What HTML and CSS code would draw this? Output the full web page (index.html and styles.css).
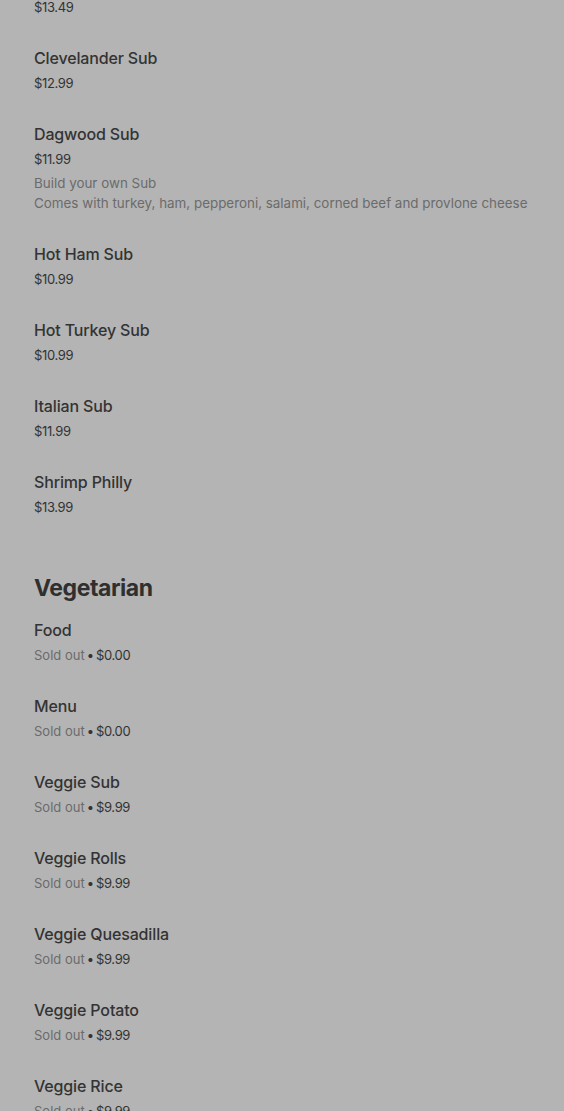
FILE: index.html
```html
<!DOCTYPE html>
<html lang="en">
<head>
<meta charset="utf-8">
<title>Menu</title>
<link rel="stylesheet" href="styles.css">
</head>
<body>
<main class="menu">
  <section class="section first">
    <div class="item">
      <div class="price">$13.49</div>
    </div>
    <div class="item">
      <div class="title">Clevelander Sub</div>
      <div class="price">$12.99</div>
    </div>
    <div class="item">
      <div class="title">Dagwood Sub</div>
      <div class="price">$11.99</div>
      <div class="desc">Build your own Sub<br>Comes with turkey, ham, pepperoni, salami, corned beef and provlone cheese</div>
    </div>
    <div class="item">
      <div class="title">Hot Ham Sub</div>
      <div class="price">$10.99</div>
    </div>
    <div class="item">
      <div class="title">Hot Turkey Sub</div>
      <div class="price">$10.99</div>
    </div>
    <div class="item">
      <div class="title">Italian Sub</div>
      <div class="price">$11.99</div>
    </div>
    <div class="item">
      <div class="title">Shrimp Philly</div>
      <div class="price">$13.99</div>
    </div>
  </section>
  <section class="section">
    <h2 class="heading">Vegetarian</h2>
    <div class="item">
      <div class="title">Food</div>
      <div class="price"><span class="sold">Sold out</span><span class="dot">•</span>$0.00</div>
    </div>
    <div class="item">
      <div class="title">Menu</div>
      <div class="price"><span class="sold">Sold out</span><span class="dot">•</span>$0.00</div>
    </div>
    <div class="item">
      <div class="title">Veggie Sub</div>
      <div class="price"><span class="sold">Sold out</span><span class="dot">•</span>$9.99</div>
    </div>
    <div class="item">
      <div class="title">Veggie Rolls</div>
      <div class="price"><span class="sold">Sold out</span><span class="dot">•</span>$9.99</div>
    </div>
    <div class="item">
      <div class="title">Veggie Quesadilla</div>
      <div class="price"><span class="sold">Sold out</span><span class="dot">•</span>$9.99</div>
    </div>
    <div class="item">
      <div class="title">Veggie Potato</div>
      <div class="price"><span class="sold">Sold out</span><span class="dot">•</span>$9.99</div>
    </div>
    <div class="item">
      <div class="title">Veggie Rice</div>
      <div class="price"><span class="sold">Sold out</span><span class="dot">•</span>$9.99</div>
    </div>
  </section>
</main>
</body>
</html>
```
FILE: styles.css
```css
html, body {
  margin: 0;
  padding: 0;
  background: #b4b4b4;
  overflow: hidden;
}
body {
  font-family: Inter, "Noto Sans", sans-serif;
  color: #333333;
}
.menu {
  margin-top: -3px;
  padding: 0 34px;
  display: flex;
  flex-direction: column;
  gap: 55px;
}
.section {
  display: flex;
  flex-direction: column;
  gap: 29px;
}
.heading {
  margin: 0 0 -15px;
  font-size: 23px;
  line-height: 32px;
  font-weight: 700;
  letter-spacing: -0.45px;
  color: #2f2f2f;
}
.item {
  display: flex;
  flex-direction: column;
}
.title {
  font-size: 16px;
  line-height: 24px;
  font-weight: 500;
  letter-spacing: -0.15px;
  color: #333333;
  margin-bottom: 3px;
}
.price {
  font-size: 13px;
  line-height: 20px;
  height: 20px;
  letter-spacing: -0.35px;
  color: #333333;
}
.sold {
  color: #6b6b6b;
  letter-spacing: 0;
}
.dot {
  margin: 0 2px 0 2px;
  letter-spacing: 0;
}
.desc {
  margin-top: 4px;
  font-size: 13.4px;
  line-height: 20px;
  color: #6b6b6b;
}
```
